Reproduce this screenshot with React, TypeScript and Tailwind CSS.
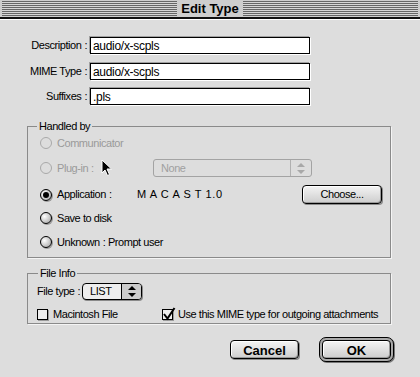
import React from "react";

function Radio({ checked, disabled }: { checked?: boolean; disabled?: boolean }) {
  return (
    <span
      className={
        disabled
          ? "w-[12px] h-[12px] rounded-full border border-[#a9a9a9] bg-[#dddddd] shrink-0"
          : "w-[12px] h-[12px] rounded-full border border-black bg-[radial-gradient(circle_at_35%_35%,#ffffff,#b5b5b5_75%)] shadow-[1px_1px_0_#9a9a9a] shrink-0 flex items-center justify-center"
      }
    >
      {checked && <span className="w-[6px] h-[6px] rounded-full bg-black" />}
    </span>
  );
}

function Check({ checked }: { checked?: boolean }) {
  return (
    <span className="relative w-[11px] h-[11px] border border-black bg-[#eeeeee] shadow-[1px_1px_0_#9a9a9a] shrink-0">
      {checked && (
        <svg className="absolute -top-[3px] -left-[1px]" width="14" height="14" viewBox="0 0 14 14">
          <path d="M2 7 L5.5 11.5 L12.5 1" stroke="#000" strokeWidth="2" fill="none" />
        </svg>
      )}
    </span>
  );
}

function Arrows({ color }: { color: string }) {
  return (
    <svg width="8" height="11" viewBox="0 0 8 11">
      <path d="M4 0 L8 4 L0 4 Z" fill={color} />
      <path d="M0 7 L8 7 L4 11 Z" fill={color} />
    </svg>
  );
}

// Geneva-style colon: sits a little apart from the word
function Colon() {
  return <span className="ml-[3px]">:</span>;
}

function Field({ value }: { value: string }) {
  return (
    <div className="w-[220px] h-[17px] border border-black bg-white shadow-[-1px_-1px_0_#a0a0a0,1px_1px_0_#ffffff] px-[2px] flex items-center text-[12px] tracking-[-0.3px]">
      {value}
    </div>
  );
}

export default function App() {
  return (
    <div className="w-[420px] h-[377px] bg-[#dddddd] relative overflow-hidden flex flex-col font-['Liberation_Sans',Arial,sans-serif] text-[11px] tracking-[-0.45px] text-black">
      {/* title bar */}
      <div className="h-[17px] bg-[#cecece] px-[2px] py-[1px] shrink-0">
        <div className="h-full bg-[repeating-linear-gradient(to_bottom,#666666_0_1px,#d6d6d6_1px_2px)] flex items-center justify-center">
          <span className="bg-[#cecece] px-[4px] font-bold text-[13px] leading-[15px] tracking-normal">Edit Type</span>
        </div>
      </div>
      <div className="h-[2px] bg-[#111111] shrink-0" />
      <div className="h-[1px] bg-white shrink-0" />

      {/* text fields */}
      <div className="flex flex-col mt-[17px]">
        <div className="flex items-center">
          <span className="w-[90px] pr-[3px] text-right">Description<Colon /></span>
          <Field value="audio/x-scpls" />
        </div>
        <div className="flex items-center mt-[9px]">
          <span className="w-[90px] pr-[3px] text-right">MIME Type<Colon /></span>
          <Field value="audio/x-scpls" />
        </div>
        <div className="flex items-center mt-[8px]">
          <span className="w-[90px] pr-[3px] text-right">Suffixes<Colon /></span>
          <Field value=".pls" />
        </div>
      </div>

      {/* Handled by */}
      <fieldset className="ml-[27px] w-[364px] mt-[15px] border border-[#8a8a8a] shadow-[1px_1px_0_#f4f4f4] pl-[12px] pt-[2px] pb-[7px]">
        <legend className="-ml-[3px] px-[2px] leading-[13px]">Handled by</legend>
        <div className="flex flex-col">
          <div className="h-[16px] flex items-center gap-[5px] text-[#9a9a9a]">
            <Radio disabled />
            <span>Communicator</span>
          </div>
          <div className="h-[18px] mt-[8px] flex items-center">
            <Radio disabled />
            <span className="w-[101px] pl-[5px] text-[#9a9a9a]">Plug-in<Colon /></span>
            <div className="w-[159px] h-[18px] rounded-[3px] border border-[#a3a3a3] flex items-center">
              <span className="flex-1 pl-[7px] text-[#a0a0a0]">None</span>
              <span className="w-[21px] h-full border-l border-[#b0b0b0] flex items-center justify-center">
                <Arrows color="#a8a8a8" />
              </span>
            </div>
          </div>
          <div className="h-[19px] mt-[8px] flex items-center">
            <Radio checked />
            <span className="w-[85px] pl-[5px]">Application<Colon /></span>
            <span className="w-[165px] tracking-[0.6px]">M A C A S T 1.0</span>
            <button className="w-[80px] h-[19px] rounded-[4px] border border-black bg-[linear-gradient(#f4f4f4,#cdcdcd)] shadow-[inset_1px_1px_0_#ffffff,inset_-1px_-1px_0_#9a9a9a,1px_1px_0_#8a8a8a] text-[11px]">
              Choose...
            </button>
          </div>
          <div className="h-[16px] mt-[6px] flex items-center gap-[5px]">
            <Radio />
            <span>Save to disk</span>
          </div>
          <div className="h-[16px] mt-[8px] flex items-center gap-[5px]">
            <Radio />
            <span>Unknown<Colon /> Prompt user</span>
          </div>
        </div>
      </fieldset>

      {/* File Info */}
      <fieldset className="ml-[27px] w-[364px] mt-[9px] border border-[#8a8a8a] shadow-[1px_1px_0_#f4f4f4] pl-[9px] pt-[3px] pb-[2px]">
        <legend className="ml-[1px] px-[2px] leading-[13px]">File Info</legend>
        <div className="h-[17px] flex items-center">
          <span className="w-[45px]">File type<Colon /></span>
          <div className="w-[60px] h-[17px] rounded-[4px] border border-black bg-[#eeeeee] shadow-[1px_1px_0_#8a8a8a] flex items-center">
            <span className="flex-1 pl-[7px]">LIST</span>
            <span className="w-[20px] h-full border-l border-black bg-[#cccccc] rounded-r-[3px] flex items-center justify-center">
              <Arrows color="#000" />
            </span>
          </div>
        </div>
        <div className="h-[13px] mt-[8px] flex items-center whitespace-nowrap">
          <div className="w-[125px] flex items-center gap-[5px]">
            <Check />
            <span>Macintosh File</span>
          </div>
          <div className="flex items-center gap-[5px]">
            <Check checked />
            <span>Use this MIME type for outgoing attachments</span>
          </div>
        </div>
      </fieldset>

      {/* buttons */}
      <div className="flex items-center justify-end gap-[20px] pr-[26px] mt-[13px]">
        <button className="w-[69px] h-[19px] rounded-[4px] border border-black bg-[linear-gradient(#f4f4f4,#cdcdcd)] shadow-[inset_1px_1px_0_#ffffff,inset_-1px_-1px_0_#9a9a9a,1px_1px_0_#8a8a8a] font-bold text-[13px] tracking-normal">
          Cancel
        </button>
        <div className="w-[75px] h-[25px] rounded-[7px] border border-black bg-[#a9a9a9] shadow-[1px_1px_0_#777777] p-[2px]">
          <button className="w-full h-full rounded-[4px] border border-black bg-[linear-gradient(#f4f4f4,#cdcdcd)] shadow-[inset_1px_1px_0_#ffffff,inset_-1px_-1px_0_#9a9a9a] font-bold text-[13px] tracking-normal">
            OK
          </button>
        </div>
      </div>

      {/* mouse pointer */}
      <svg className="absolute left-[101px] top-[159px]" width="12" height="18" viewBox="0 0 12 18">
        <path d="M1 1 L1 14 L4 11 L6.5 16.5 L8.5 15.5 L6 10 L10.5 10 Z" fill="#000" stroke="#fff" strokeWidth="1" />
      </svg>
    </div>
  );
}
